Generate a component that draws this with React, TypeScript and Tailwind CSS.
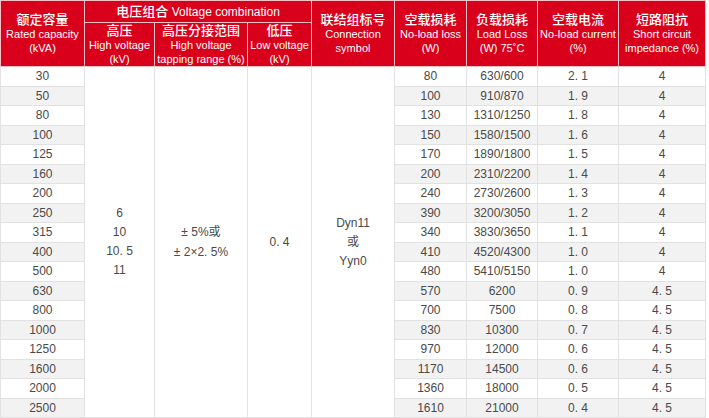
const rows: [string, string, string, string, string][] = [
  ["30", "80", "630/600", "2. 1", "4"],
  ["50", "100", "910/870", "1. 9", "4"],
  ["80", "130", "1310/1250", "1. 8", "4"],
  ["100", "150", "1580/1500", "1. 6", "4"],
  ["125", "170", "1890/1800", "1. 5", "4"],
  ["160", "200", "2310/2200", "1. 4", "4"],
  ["200", "240", "2730/2600", "1. 3", "4"],
  ["250", "390", "3200/3050", "1. 2", "4"],
  ["315", "340", "3830/3650", "1. 1", "4"],
  ["400", "410", "4520/4300", "1. 0", "4"],
  ["500", "480", "5410/5150", "1. 0", "4"],
  ["630", "570", "6200", "0. 9", "4. 5"],
  ["800", "700", "7500", "0. 8", "4. 5"],
  ["1000", "830", "10300", "0. 7", "4. 5"],
  ["1250", "970", "12000", "0. 6", "4. 5"],
  ["1600", "1170", "14500", "0. 6", "4. 5"],
  ["2000", "1360", "18000", "0. 5", "4. 5"],
  ["2500", "1610", "21000", "0. 4", "4. 5"],
]

const font = { fontFamily: '"Liberation Sans", "Noto Sans CJK SC", sans-serif' }

function Head({ zh, en, rows = 2, cols = 1 }: { zh: string; en: string[]; rows?: number; cols?: number }) {
  return (
    <th
      rowSpan={rows}
      colSpan={cols}
      className="border border-[#f5c0c6] bg-[#d9001b] px-0 align-middle font-normal text-white"
    >
      <div className="text-[13px] font-medium leading-[15px]">{zh}</div>
      {en.map((l) => (
        <div key={l} className="whitespace-nowrap text-[11px] leading-[14px]">
          {l}
        </div>
      ))}
    </th>
  )
}

export default function App() {
  return (
    <div className="h-[418px] w-[709px] overflow-hidden bg-white" style={font}>
      <table className="w-[705px] table-fixed border-collapse text-center text-[12px] text-[#4a4a4a]">
        <colgroup>
          <col className="w-[84px]" />
          <col className="w-[70px]" />
          <col className="w-[93px]" />
          <col className="w-[64px]" />
          <col className="w-[83px]" />
          <col className="w-[72px]" />
          <col className="w-[71px]" />
          <col className="w-[81px]" />
          <col className="w-[87px]" />
        </colgroup>
        <thead>
          <tr className="h-[22px]">
            <Head zh="额定容量" en={["Rated capacity", "(kVA)"]} />
            <th colSpan={3} className="border border-[#f5c0c6] bg-[#d9001b] text-[13px] font-medium text-white">
              电压组合 <span className="text-[12px] font-normal">Voltage combination</span>
            </th>
            <Head zh="联结组标号" en={["Connection", "symbol"]} />
            <Head zh="空载损耗" en={["No-load loss", "(W)"]} />
            <Head zh="负载损耗" en={["Load Loss", "(W) 75˚C"]} />
            <Head zh="空载电流" en={["No-load current", "(%)"]} />
            <Head zh="短路阻抗" en={["Short circuit", "impedance (%)"]} />
          </tr>
          <tr className="h-[43px]">
            <Head zh="高压" en={["High voltage", "(kV)"]} rows={1} />
            <Head zh="高压分接范围" en={["High  voltage", "tapping range (%)"]} rows={1} />
            <Head zh="低压" en={["Low voltage", "(kV)"]} rows={1} />
          </tr>
        </thead>
        <tbody>
          {rows.map((r, i) => {
            const bg = i % 2 === 1 ? "bg-[#f2f2f2]" : "bg-white"
            const cell = `border border-[#e2e2e2] p-0 ${bg}`
            return (
              <tr key={r[0]} className="h-[19.5px]">
                <td className={cell}>{r[0]}</td>
                {i === 0 && (
                  <>
                    <td rowSpan={18} className="border border-[#e2e2e2] bg-white leading-[19px]">
                      <div>6</div>
                      <div>10</div>
                      <div>10. 5</div>
                      <div>11</div>
                    </td>
                    <td rowSpan={18} className="border border-[#e2e2e2] bg-white leading-[20px]">
                      <div>± 5%或</div>
                      <div>± 2×2. 5%</div>
                    </td>
                    <td rowSpan={18} className="border border-[#e2e2e2] bg-white">
                      0. 4
                    </td>
                    <td rowSpan={18} className="border border-[#e2e2e2] bg-white leading-[19px]">
                      <div>Dyn11</div>
                      <div>或</div>
                      <div>Yyn0</div>
                    </td>
                  </>
                )}
                <td className={cell}>{r[1]}</td>
                <td className={cell}>{r[2]}</td>
                <td className={cell}>{r[3]}</td>
                <td className={cell}>{r[4]}</td>
              </tr>
            )
          })}
        </tbody>
      </table>
    </div>
  )
}
